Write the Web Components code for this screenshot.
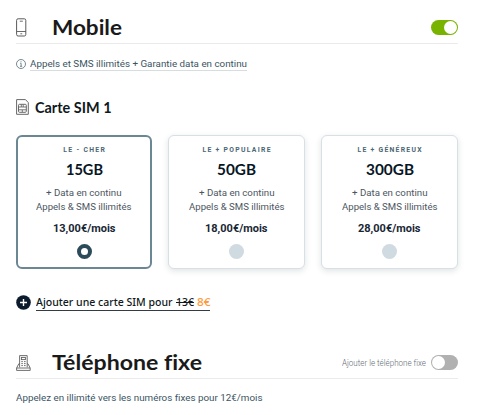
<!DOCTYPE html>
<html lang="fr">
<head>
<meta charset="utf-8">
<title>Mobile</title>
<style>
body { margin: 0; background: #fff; font-family: Roboto, "Liberation Sans", sans-serif; color: #0d1b2a; }
</style>
</head>
<body>
<plan-page></plan-page>
<script>
/* One line of text that spans the width given in "w": widened glyphs, or tracking with "tracked". */
class FitText extends HTMLElement {
  connectedCallback() {
    this.attachShadow({ mode: 'open' }).innerHTML =
      '<style>:host{display:inline-block;white-space:nowrap;font-variant-ligatures:none}span{display:inline-block;transform-origin:0 50%}:host([strike]) span{text-decoration:line-through 1px}</style><span><slot></slot></span>';
    const span = this.shadowRoot.querySelector('span');
    const target = parseFloat(this.getAttribute('w'));
    if (!target) return;
    const width = span.getBoundingClientRect().width;
    if (this.hasAttribute('tracked')) {
      const gap = (target - width) / (this.textContent.length - 1);
      span.style.letterSpacing = gap.toFixed(3) + 'px';
      span.style.marginRight = (-gap).toFixed(3) + 'px';
    } else {
      span.style.transform = 'scaleX(' + (target / width).toFixed(4) + ')';
      this.style.width = target + 'px';
    }
  }
}
customElements.define('fit-text', FitText);

class ToggleSwitch extends HTMLElement {
  constructor() {
    super();
    this.attachShadow({ mode: 'open' }).innerHTML = `<style>
      :host { display: flex; box-sizing: border-box; width: 27.5px; height: 15px; padding: 1px; border-radius: 8px; background: #b1b1b1; }
      :host([on]) { background: #78b300; justify-content: flex-end; }
      i { width: 13px; height: 13px; border-radius: 50%; background: #fff; }
    </style><i></i>`;
  }
}
customElements.define('toggle-switch', ToggleSwitch);

class SectionHead extends HTMLElement {
  constructor() {
    super();
    this.attachShadow({ mode: 'open' }).innerHTML = `<style>
      :host { display: flex; align-items: center; box-sizing: border-box; height: 32px; border-bottom: 1px solid #ebebeb; }
      .icon { width: 35.5px; display: flex; }
      .title { flex: 1; font: 700 21.5px/28px Lato, sans-serif; height: 30px; color: #1a1a1a; }
      .end { display: flex; align-items: center; gap: 5px; font-size: 8.6px; font-weight: 300; color: #5f6b73; }
    </style>
    <div class="icon"><slot name="icon"></slot></div>
    <div class="title"><slot></slot></div>
    <div class="end"><slot name="end"></slot></div>`;
  }
}
customElements.define('section-head', SectionHead);

class PlanCard extends HTMLElement {
  connectedCallback() {
    const a = n => this.getAttribute(n);
    this.attachShadow({ mode: 'open' }).innerHTML = `<style>
      :host { display: flex; flex-direction: column; align-items: center; box-sizing: border-box; height: 134px; padding-top: 8px;
        border: 1px solid #d6e0e5; border-radius: 6px; background: #fff; box-shadow: 0 2px 6px rgba(20,40,50,.13); }
      :host([selected]) { border: 2px solid #6c8794; padding-top: 7px; box-shadow: none; }
      .tag { height: 12px; font: 700 6.8px/12px Roboto, sans-serif; color: #4a6674; }
      .data { margin-top: 3px; height: 20px; font: 700 15px/20px Lato, sans-serif; color: #071625; }
      .line { height: 14px; font-size: 9.3px; line-height: 14px; font-weight: 400; color: #4c5661; }
      .first { margin-top: 7px; }
      .price { margin-top: 7px; height: 16px; font: 700 11px/16px Roboto, sans-serif; color: #182634; }
      .radio { margin-top: 7px; box-sizing: border-box; width: 15px; height: 15px; border-radius: 50%; background: #cfdae1; }
      :host([selected]) .radio { border: 4.5px solid #2c4b5a; background: #fff; }
    </style>
    <fit-text class="tag" tracked w="${a('tagw')}">${a('tag')}</fit-text>
    <fit-text class="data" w="${a('dataw')}">${a('data')}</fit-text>
    <fit-text class="line first" w="75.5">+ Data en continu</fit-text>
    <fit-text class="line" w="95.5">Appels &amp; SMS illimités</fit-text>
    <fit-text class="price" w="62.5">${a('price')}€/mois</fit-text>
    <div class="radio"></div>`;
  }
}
customElements.define('plan-card', PlanCard);

class PlanPage extends HTMLElement {
  connectedCallback() {
    this.attachShadow({ mode: 'open' }).innerHTML = `<style>
      :host { display: flex; flex-direction: column; box-sizing: border-box; width: 480px; height: 415px; padding: 12px 22px 0 16px; overflow: hidden; }
      svg { display: block; flex: none; }
      .info { display: flex; align-items: center; gap: 4px; height: 14px; margin-top: 13px; font-size: 9.3px; color: #3b5563; }
      .info fit-text { line-height: 12px; border-bottom: 1px solid #d5dde1; }
      .sim { display: flex; align-items: center; gap: 6px; height: 20px; margin-top: 26px; font: 700 15px/20px Lato, sans-serif; color: #101820; }
      .cards { display: grid; grid-template-columns: 136px 137px 137px; gap: 16px; margin-top: 18px; }
      .add { display: flex; align-items: center; gap: 5px; height: 18px; margin-top: 24px; font: 500 10.8px/16px "Noto Sans", sans-serif; color: #101820; }
      .link { display: flex; gap: 3px; height: 16px; border-bottom: 1px solid #343c43; }
      .sale { color: #ff9a3c; }
      .fixed { margin-top: 36px; }
      .note { margin-top: 12px; font-size: 9.3px; line-height: 14px; color: #3b5563; }
    </style>
    <section-head>
      <svg slot="icon" width="11" height="19" viewBox="0 0 11 19" fill="none" stroke="#5a5a5a"><rect x=".6" y=".8" width="9.2" height="17.2" rx="1.5"/><path d="M1 13.5h9M3.8 3.2h3M4.4 15.8h1.8" stroke-width=".9"/></svg>
      <fit-text w="70">Mobile</fit-text>
      <toggle-switch slot="end" on></toggle-switch>
    </section-head>
    <div class="info">
      <svg width="10" height="10" viewBox="0 0 10 10" fill="none" stroke="#536b77" stroke-width=".8"><circle cx="5" cy="5" r="4.5"/><path d="M4.2 4.3H5.1V7.2M4 7.3h2.2M5 2.3v1"/></svg>
      <fit-text w="217">Appels et SMS illimités + Garantie data en continu</fit-text>
    </div>
    <div class="sim">
      <svg width="13" height="16" viewBox="0 0 13 16" fill="none" stroke="#686868"><path d="M.6.6H9.5L12.3 3.6V15.3H.6Z"/><rect x="2.5" y="5.3" width="7.8" height="8" rx="1"/><path d="M2.5 8h2.8V5.5M7.2 5.5V8h3.1M2.5 10.8h7.8M6.3 10.8v2.3M5.3 8h2" stroke-width=".9"/></svg>
      <fit-text w="76.5">Carte SIM 1</fit-text>
    </div>
    <div class="cards">
      <plan-card selected tag="LE - CHER" tagw="41.5" data="15GB" dataw="37" price="13,00"></plan-card>
      <plan-card tag="LE + POPULAIRE" tagw="68" data="50GB" dataw="39" price="18,00"></plan-card>
      <plan-card tag="LE + GÉNÉREUX" tagw="64" data="300GB" dataw="48" price="28,00"></plan-card>
    </div>
    <div class="add">
      <svg width="15" height="15" viewBox="0 0 15 15"><circle cx="7.5" cy="7.5" r="7.3" fill="#0c1c2c"/><path d="M7.5 4v7M4 7.5h7" stroke="#fff" stroke-width="1.4"/></svg>
      <div class="link"><fit-text w="136.5">Ajouter une carte SIM pour</fit-text><fit-text strike w="18">13€</fit-text><fit-text class="sale" w="13.5">8€</fit-text></div>
    </div>
    <section-head class="fixed">
      <svg slot="icon" width="15" height="16" viewBox="0 0 15 16" fill="none" stroke="#606060" stroke-width=".9"><path d="M3.6 12.3V.6h7.6v11.7M3.6 8.8H2.8L.6 13v2.4h13.6V13L12 8.8H11.2M.8 13h13.2"/><rect x="5.4" y="2.4" width="4" height="2.2"/><path d="M5.3 6.6h1.6M8 6.6h1.6M5.3 8.6h1.6M8 8.6h1.6M5.3 10.6h1.6M8 10.6h1.6"/></svg>
      <fit-text w="150">Téléphone fixe</fit-text>
      <fit-text slot="end" w="84">Ajouter le téléphone fixe</fit-text>
      <toggle-switch slot="end"></toggle-switch>
    </section-head>
    <fit-text class="note" w="246.5">Appelez en illimité vers les numéros fixes pour 12€/mois</fit-text>`;
  }
}
customElements.define('plan-page', PlanPage);
</script>
</body>
</html>
